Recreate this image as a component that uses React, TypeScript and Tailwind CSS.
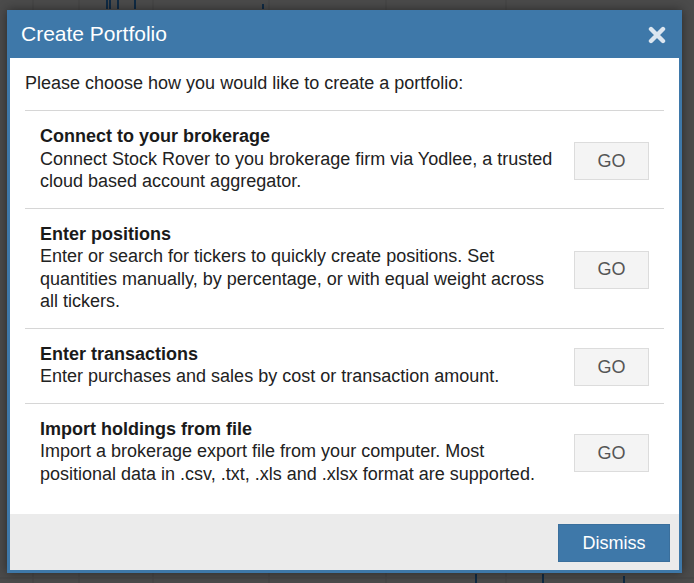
import React from 'react';

interface Choice {
  title: string;
  text: string;
}

const choices: Choice[] = [
  {
    title: 'Connect to your brokerage',
    text: 'Connect Stock Rover to you brokerage firm via Yodlee, a trusted cloud based account aggregator.',
  },
  {
    title: 'Enter positions',
    text: 'Enter or search for tickers to quickly create positions. Set quantities manually, by percentage, or with equal weight across all tickers.',
  },
  {
    title: 'Enter transactions',
    text: 'Enter purchases and sales by cost or transaction amount.',
  },
  {
    title: 'Import holdings from file',
    text: 'Import a brokerage export file from your computer. Most positional data in .csv, .txt, .xls and .xlsx format are supported.',
  },
];

// faint chart behind the modal
const Backdrop: React.FC = () => (
  <svg className="absolute inset-0" width="694" height="583" viewBox="0 0 694 583">
    <rect width="694" height="583" fill="#4b4b4b" />
    {[33, 79, 153, 269, 386, 506].map(x => (
      <line key={x} x1={x} y1="0" x2={x} y2="583" stroke="#444" strokeWidth="1" />
    ))}
    <line x1="0" y1="578" x2="694" y2="578" stroke="#444" strokeWidth="1" />
    <g stroke="#0f2a44" strokeWidth="2">
      <line x1="107" y1="0" x2="107" y2="9" />
      <line x1="110" y1="0" x2="110" y2="9" />
      <line x1="118" y1="0" x2="118" y2="9" />
      <line x1="135" y1="0" x2="135" y2="9" />
      <line x1="263" y1="4" x2="263" y2="9" />
      <line x1="476" y1="574" x2="476" y2="583" />
      <line x1="543" y1="574" x2="543" y2="583" />
      <line x1="624" y1="576" x2="624" y2="583" />
    </g>
  </svg>
);

const App: React.FC = () => {
  return (
    <div
      className="relative w-[694px] h-[583px] overflow-hidden"
      style={{ fontFamily: '"Liberation Sans", Arial, sans-serif' }}
    >
      <Backdrop />

      <div className="absolute left-[7px] top-[10px] w-[675px] h-[563px] flex flex-col border-x-[3px] border-b-[3px] border-[#3e78a9] bg-white shadow-[0_0_10px_rgba(0,0,0,0.45)]">
        {/* Header */}
        <div className="h-[48px] -mx-[3px] bg-[#3e78a9] flex items-center justify-between pl-[14px] pr-[16px]">
          <span className="text-[21px] leading-[24px] text-white">Create Portfolio</span>
          <svg width="18" height="18" viewBox="0 0 18 18" className="mt-[1px]">
            <path d="M3 3 L15 15 M15 3 L3 15" stroke="#dce6f0" strokeWidth="4.4" strokeLinecap="round" />
          </svg>
        </div>

        {/* Body */}
        <div className="flex-1 px-[15px] pt-[14px] text-[18px] leading-[22.5px] text-[#222]">
          <p className="mb-[15.5px]">Please choose how you would like to create a portfolio:</p>
          {choices.map(c => (
            <div key={c.title} className="flex items-center border-t border-[#d6d6d6] pl-[15px] pr-[15px] pt-[14px] pb-[15px]">
              <div className="flex-1">
                <p className="font-bold text-[#1a1a1a]">{c.title}</p>
                <p>{c.text}</p>
              </div>
              <button className="ml-[15px] mt-[4px] w-[75px] h-[38px] shrink-0 bg-[#f4f4f4] border border-[#dcdcdc] text-[#555] text-[18px]">
                GO
              </button>
            </div>
          ))}
        </div>

        {/* Footer */}
        <div className="h-[56px] bg-[#ebebeb] flex justify-end pt-[10px] pr-[9px]">
          <button className="w-[112px] h-[38px] bg-[#3e78a9] border border-[#3a6f9c] text-white text-[18px]">
            Dismiss
          </button>
        </div>
      </div>
    </div>
  );
};

export default App;
